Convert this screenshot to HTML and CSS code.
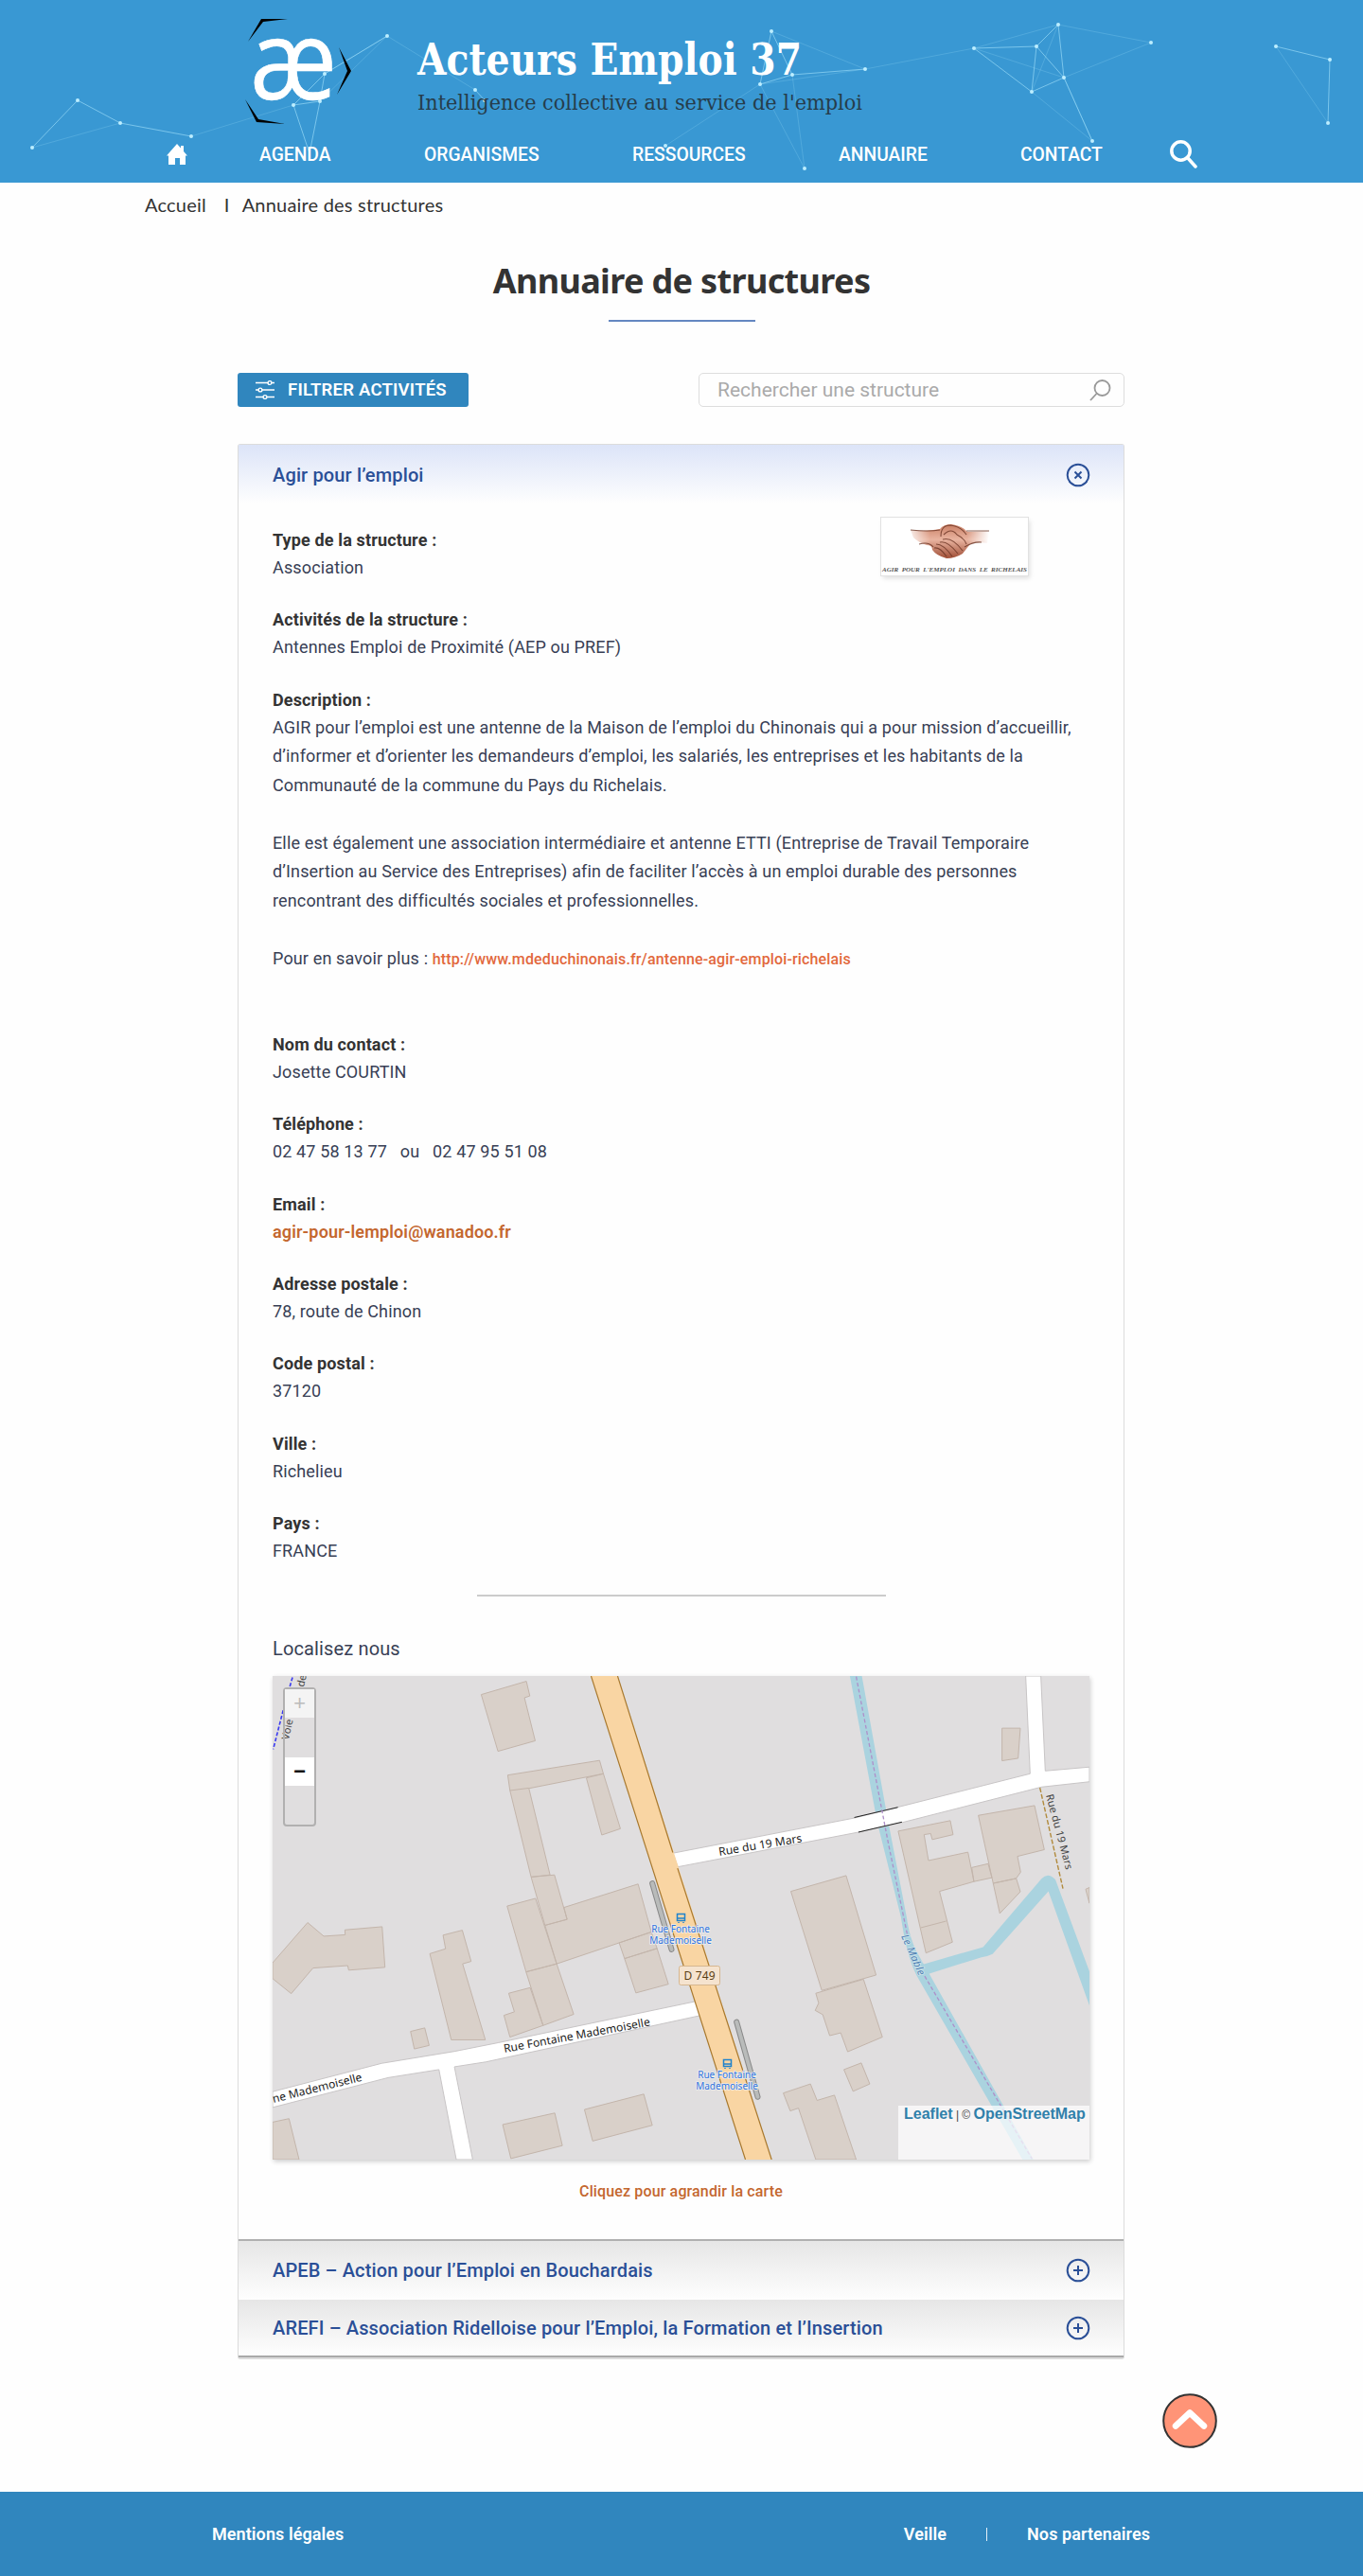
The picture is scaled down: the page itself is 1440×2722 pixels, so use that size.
FILE: index.html
```html
<!DOCTYPE html>
<html lang="fr">
<head>
<meta charset="utf-8">
<title>Annuaire de structures</title>
<link rel="stylesheet" href="styles.css">
</head>
<body>
<header class="banner">
  <svg class="network" viewBox="0 0 1440 193" aria-hidden="true">
    <g class="faint"><path d="M34 156L127 130M202 144L310 111M343 78L409 38L338 107M409 38L502 95M703 154L803 89M815 33L914 73M803 89L914 73L1029 51L1118 26L1216 45L1124 82L1029 51M803 89L850 178L837 79M1118 26L1090 97L1154 149L1124 82M1348 49L1403 130"/></g>
    <g class="links"><path d="M34 156L82 106L127 130L202 144M310 111L343 78L409 38M343 78L338 107L310 111L327 162L338 107M502 95L512 106M803 89L815 33L837 79L803 89M837 79L914 73M1029 51L1095 49L1118 26L1124 82L1095 49L1090 97L1029 51M1090 97L1124 82L1154 149M1348 49L1405 63L1403 130"/></g>
    <g class="nodes"><path d="M34 156h0M82 106h0M127 130h0M202 144h0M310 111h0M343 78h0M338 107h0M409 38h0M502 95h0M512 106h0M703 154h0M815 33h0M837 79h0M803 89h0M914 73h0M850 178h0M1029 51h0M1118 26h0M1095 49h0M1090 97h0M1124 82h0M1216 45h0M1154 149h0M1348 49h0M1405 63h0M1403 130h0"/></g>
  </svg>
  <div class="brand">
    <svg class="logo" viewBox="0 0 114 113" role="img" aria-label="Acteurs Emploi 37">
      <path d="M3 24L17 0H45L19 3ZM99 30L112 55L97 80L108 55ZM0 85L14 106L42 111L12 109Z"/>
      <text x="5" y="84.500" textLength="92" lengthAdjust="spacingAndGlyphs">æ</text>
    </svg>
    <div class="brand-text">
      <svg class="wordmark" viewBox="0 0 480 100">
        <text class="name" x="1" y="42" textLength="406" lengthAdjust="spacingAndGlyphs">Acteurs Emploi 37</text>
        <text class="motto" x="1" y="79" textLength="470" lengthAdjust="spacingAndGlyphs">Intelligence collective au service de l'emploi</text>
      </svg>
    </div>
  </div>
  <nav class="menu">
    <a class="home"><svg viewBox="0 0 22 22"><path d="M11 0l4 4.500V2h3v6l4 4.500h-2V22h-6v-7H9v7H2v-9.500H0z"/></svg></a>
    <a>AGENDA</a><a>ORGANISMES</a><a>RESSOURCES</a><a>ANNUAIRE</a><a>CONTACT</a>
    <a class="find"><svg viewBox="0 0 29 30"><circle cx="11.500" cy="11.500" r="9.700"/><path d="M18.500 18.500L27 28"/></svg></a>
  </nav>
</header>
<p class="crumbs"><a>Accueil</a><span>I</span><a>Annuaire des structures</a></p>
<main>
  <h1><span>Annuaire de structures</span></h1>
  <div class="tools">
    <button class="filter"><svg viewBox="0 0 20 20"><path d="M0 2.500h13M17 2.500h3M0 10h3M7 10h13M0 17.500h8M12 17.500h8"/><circle cx="15" cy="2.500" r="1.900"/><circle cx="5" cy="10" r="1.900"/><circle cx="10" cy="17.500" r="1.900"/></svg>FILTRER ACTIVITÉS</button>
    <div class="search"><span>Rechercher une structure</span><svg viewBox="0 0 23 23"><circle cx="13.500" cy="9" r="8"/><path d="M7.500 15L1 22"/></svg></div>
  </div>
  <section class="panel">
    <div class="panel-head"><h2>Agir pour l’emploi</h2><svg class="toggle" viewBox="0 0 26 26"><circle cx="13" cy="13" r="11.300"/><path d="M9.500 9.500l7 7M16.500 9.500l-7 7"/></svg></div>
    <div class="panel-body">
      <svg class="hands" viewBox="0 0 155 61">
        <defs>
          <linearGradient id="skin" x1="0" y1="0" x2="0" y2="1"><stop offset="0" stop-color="#c97e64"/><stop offset=".45" stop-color="#e9b4a0"/><stop offset="1" stop-color="#a04e36"/></linearGradient>
          <linearGradient id="wrist" x1="0" y1="0" x2="1" y2="0"><stop offset="0" stop-color="#fff" stop-opacity=".8"/><stop offset=".25" stop-color="#fff" stop-opacity="0"/><stop offset=".72" stop-color="#fff" stop-opacity="0"/><stop offset="1" stop-color="#fff"/></linearGradient>
        </defs>
        <path d="M31 13Q48 15 62 12Q66 7 74 7Q86 9 91 15Q104 15 114 14L112 27Q103 25 94 28Q89 34 86 38Q78 43 69 43Q58 40 54 34Q54 29 48 29Q39 26 34 21Z" fill="url(#skin)"/>
        <path d="M31 13H114V29H31Z" fill="url(#wrist)"/>
        <path class="crease" d="M31 13Q50 15 62 13M90 14L114 14M63 20Q63 8 73 8Q84 9 90 18M66 18Q74 10 80 18Q88 22 90 28M65 23Q75 20 86 35M62 26Q70 24 81 38M58 28Q66 28 75 41M56 32Q62 31 69 41M40 28Q50 25 55 31M88 31Q98 25 106 26"/>
        <text x="1" y="57" textLength="153" lengthAdjust="spacingAndGlyphs">AGIR &nbsp;POUR &nbsp;L'EMPLOI &nbsp;DANS &nbsp;LE &nbsp;RICHELAIS</text>
      </svg>
      <dl>
        <div><dt>Type de la structure :</dt><dd>Association</dd></div>
        <div><dt>Activités de la structure :</dt><dd>Antennes Emploi de Proximité (AEP ou PREF)</dd></div>
        <div class="desc"><dt>Description :</dt><dd>
          <p>AGIR pour l’emploi est une antenne de la Maison de l’emploi du Chinonais qui a pour mission d’accueillir,<br>d’informer et d’orienter les demandeurs d’emploi, les salariés, les entreprises et les habitants de la<br>Communauté de la commune du Pays du Richelais.</p>
          <p>Elle est également une association intermédiaire et antenne ETTI (Entreprise de Travail Temporaire<br>d’Insertion au Service des Entreprises) afin de faciliter l’accès à un emploi durable des personnes<br>rencontrant des difficultés sociales et professionnelles.</p>
          <p>Pour en savoir plus : <a class="url">http://www.mdeduchinonais.fr/antenne-agir-emploi-richelais</a></p>
        </dd></div>
        <div><dt>Nom du contact :</dt><dd>Josette COURTIN</dd></div>
        <div><dt>Téléphone :</dt><dd>02 47 58 13 77 &nbsp; ou &nbsp; 02 47 95 51 08</dd></div>
        <div><dt>Email :</dt><dd><a class="mail">agir-pour-lemploi@wanadoo.fr</a></dd></div>
        <div><dt>Adresse postale :</dt><dd>78, route de Chinon</dd></div>
        <div><dt>Code postal :</dt><dd>37120</dd></div>
        <div><dt>Ville :</dt><dd>Richelieu</dd></div>
        <div><dt>Pays :</dt><dd>FRANCE</dd></div>
      </dl>
      <hr>
      <h3>Localisez nous</h3>
      <div class="map">
        <svg class="tiles" viewBox="24 141 2588 1381" preserveAspectRatio="none">
          <path class="water" d="M1853 141H1891L1975 560L2033 830Q2040 880 2062 925L2105 992L2435 1522H2400L2070 1005Q2034 950 2015 830L1940 560Z"/>
          <path class="water" d="M2082 965L2275 915L2460 720Q2480 700 2504 722L2612 985V1082L2482 756L2305 935Q2290 942 2270 944L2100 992Z"/>
          <g class="building">
            <path d="M685 194L828 156L839 198L822 203L856 326L738 356ZM769 424L1060 382L1072 420L836 462L903 709L843 715L776 468ZM1018 432L1072 420L1126 577L1067 595ZM776 468L836 461M843 715L917 709L957 836L887 853ZM947 802L1182 735L1224 872L924 963L887 853L957 836ZM767 798L857 776L924 963L827 986ZM1122 903L1224 872L1242 919L1139 948ZM1139 948L1242 919L1278 1021L1175 1046ZM827 986L924 963L978 1107L881 1139ZM772 1047L840 1031L881 1139L776 1172L757 1110L790 1100ZM522 934L572 920L564 881L625 867L653 956L626 963L698 1180H590ZM24 960L135 845L186 884L254 880L253 866L371 857L380 973L265 981L262 968L152 975L83 1048L24 1005ZM461 1156L506 1146L520 1196L473 1206ZM24 1415L76 1405L108 1522H24ZM753 1422L918 1389L942 1482L779 1519ZM1012 1379L1200 1335L1227 1424L1038 1469Z"/>
            <path transform="translate(1320)" d="M346 756L521 711L616 995L444 1039ZM425 1047L576 1007L636 1172L526 1214L504 1160L469 1168L447 1108L423 1096L434 1075ZM514 1265L569 1246L596 1306L543 1327ZM322 1332L408 1306L429 1353L484 1338L553 1522H425L370 1375L344 1383ZM1015 290H1073L1066 376L1015 383ZM940 539L1118 511L1149 637L1064 656L1074 701L1060 719L987 733ZM987 733L1060 719L1073 757L1008 819ZM919 688L971 677L983 717L926 728ZM686 584L851 554L860 594L794 608L789 591L768 594L782 668L907 644L926 728L817 756L858 901L774 932ZM757 860L838 841M1292 745L1280 750L1292 790Z"/>
          </g>
          <path class="road" d="M24 1328L370 1247L600 1213L740 1188L1365 1070L1377 1111L700 1243L600 1257L658 1522H606L551 1265L390 1288L24 1373Z"/>
          <path class="road" d="M1292 647L1870 546L2060 503L2424 420L2410 141H2458L2472 412L2612 401V443L2460 458L2020 559L1880 587L1308 686Z"/>
          <path class="bridge" d="M1867 545L2005 516M1880 587L2018 558"/>
          <path class="main" d="M1033 141H1117L1605 1522H1522Z"/>
          <path class="casing" d="M1033 141L1522 1522M1117 141L1292 645M1307 690L1605 1522"/>
          <path class="lane-edge" d="M1227 733L1288 922M1494 1129L1561 1343"/>
          <path class="lane" d="M1227 733L1288 922M1494 1129L1561 1343"/>
          <path class="limit" d="M1873 143L1975 620L2035 880M2090 998L2430 1520"/>
          <path class="foot" d="M2455 460L2528 748"/>
          <path class="track" d="M87 145L60 230L26 350"/>
        </svg>
        <svg class="labels" viewBox="0 0 863 511">
          <text transform="translate(245 398) rotate(-10.500)" textLength="157">Rue Fontaine Mademoiselle</text>
          <text transform="translate(1 451) rotate(-14)" textLength="97">ne Mademoiselle</text>
          <text transform="translate(472 190) rotate(-9.500)" textLength="89">Rue du 19 Mars</text>
          <text class="small" transform="translate(817 126) rotate(75)" textLength="82">Rue du 19 Mars</text>
          <text class="small" transform="translate(17 68) rotate(-78)">Voie</text>
          <text class="small" transform="translate(33 12) rotate(-78)">de</text>
          <text class="river" transform="translate(664 275) rotate(66)" textLength="46">Le Mable</text>
          <g class="stop"><text x="431" y="271">Rue Fontaine</text><text x="431" y="283">Mademoiselle</text><text x="480" y="425">Rue Fontaine</text><text x="480" y="437">Mademoiselle</text></g>
          <g class="bus"><path d="M427.500 251.500h8v7h-8zM427.500 256h8M429 260v1M434 260v1M476.500 405.500h8v7h-8zM476.500 410h8M478 414v1M483 414v1"/></g>
          <rect class="ref" x="429.500" y="306.500" width="43" height="20" rx="2"/>
          <text class="ref-text" x="451" y="321" textLength="33">D 749</text>
        </svg>
        <div class="zoom"><span class="off">+</span><span>−</span></div>
        <div class="credit"><b>Leaflet</b> | © <b>OpenStreetMap</b></div>
      </div>
      <p class="enlarge">Cliquez pour agrandir la carte</p>
    </div>
    <div class="row"><h2>APEB – Action pour l’Emploi en Bouchardais</h2><svg class="toggle" viewBox="0 0 26 26"><circle cx="13" cy="13" r="11.300"/><path d="M13 8v10M8 13h10"/></svg></div>
    <div class="row last"><h2>AREFI – Association Ridelloise pour l’Emploi, la Formation et l’Insertion</h2><svg class="toggle" viewBox="0 0 26 26"><circle cx="13" cy="13" r="11.300"/><path d="M13 8v10M8 13h10"/></svg></div>
  </section>
  <div class="up"><svg viewBox="0 0 58 58"><circle cx="29" cy="29" r="27.800"/><path d="M14 34.500L29 20.500L44 34.500"/></svg></div>
</main>
<footer><a>Mentions légales</a><div><a>Veille</a><i></i><a>Nos partenaires</a></div></footer>
</body>
</html>
```
FILE: styles.css
```css
* { box-sizing: border-box; }
body { margin: 0; background: #fefefe; font-family: Roboto, "Liberation Sans", sans-serif; color: #383f55; }
h1, h2, h3, p, dl, dd { margin: 0; }
svg { display: block; flex: none; }

.banner { position: relative; height: 193px; background: #3998d3; padding-top: 20px; }
.network { position: absolute; left: 0; top: 0; width: 1440px; height: 193px; fill: none; stroke: #a5e3fb; }
.network .links { stroke-width: 1; opacity: .6; }
.network .faint { stroke-width: 1; opacity: .22; }
.network .nodes { stroke: #bdeeff; stroke-width: 4; stroke-linecap: round; }
.brand { position: relative; display: flex; gap: 67px; padding-left: 259px; height: 113px; }
.logo { width: 114px; height: 113px; overflow: visible; }
.logo text { font: 400 117px "Open Sans", sans-serif; fill: #fff; stroke: #fff; stroke-width: .6; }
.wordmark { width: 480px; height: 100px; margin-top: 17px; overflow: visible; }
.name { font: bold 46px "DejaVu Serif", serif; fill: #fff; }
.motto { font: 22px "DejaVu Serif", serif; fill: #263d4b; }
.menu { position: relative; display: flex; align-items: center; height: 30px; margin-top: 15px; padding-left: 176px; color: #fff; font-size: 19.300px; font-weight: 500; }
.menu a { flex: none; width: 122px; margin-right: 98px; white-space: nowrap; }
.menu .home { width: 22px; margin-right: 76px; }
.menu a:nth-child(2) { width: 76px; }
.menu a:nth-child(4) { width: 120px; }
.menu a:nth-child(5) { width: 94px; }
.menu a:nth-child(6) { width: 87px; margin-right: 71px; }
.menu .find { width: 29px; margin: 0; }
.home svg { width: 22px; height: 22px; fill: #fff; }
.find svg { width: 29px; height: 30px; fill: none; stroke: #fff; stroke-width: 3.500; stroke-linecap: round; }

.crumbs { display: flex; height: 48px; padding-left: 153px; font: 20px/46px Lato, sans-serif; letter-spacing: .2px; color: #333; }
.crumbs span { margin: 0 13px 0 19px; }

h1 { width: 400px; margin: 29px auto 0; height: 70px; text-align: center; white-space: nowrap; font: 700 36px/54px "Noto Sans", sans-serif; letter-spacing: -.650px; color: #333; }
h1::after { content: ""; display: block; width: 155px; height: 2px; margin: 14px auto 0; background: #6487c1; }

.tools { display: flex; justify-content: space-between; width: 937px; margin: 54px auto 39px 251px; height: 36px; }
.filter { display: flex; align-items: center; gap: 14px; width: 244px; padding: 0 0 0 19px; border: 0; border-radius: 3px; background: #3086be; color: #fff; font: 600 18.500px Roboto, sans-serif; letter-spacing: .220px; white-space: nowrap; }
.filter svg { width: 20px; height: 20px; fill: none; stroke: #fff; stroke-width: 1.400; }
.search { display: flex; align-items: center; justify-content: space-between; width: 450px; padding: 0 13px 0 19px; border: 1px solid #ddd; border-radius: 5px; color: #aaa; font-size: 21px; line-height: 32px; }
.search span { margin-top: -1px; }
.search svg { width: 23px; height: 23px; fill: none; stroke: #999; stroke-width: 1.800; }

.panel { width: 937px; margin-left: 251px; border: 1px solid #dcdcdc; border-width: 1px 1px 2px 1px; border-radius: 3px; height: 2024px; letter-spacing: .140px; }
.panel-head, .row { display: flex; justify-content: space-between; align-items: center; height: 62px; padding: 1px 35px 0 36px; background: linear-gradient(#dce4f8, #fefefe); }
.panel h2 { font-size: 20px; font-weight: 500; color: #2a4f97; white-space: nowrap; }
.toggle { width: 26px; height: 26px; fill: none; stroke: #2a4f97; stroke-width: 2; }
.panel-body { position: relative; height: 1834px; padding: 24px 36px 0; }
.hands { position: absolute; left: 679px; top: 15px; width: 155px; height: 61px; background: #fff; outline: 1px solid #e2e2e2; box-shadow: 2px 3px 5px #0002; }
.hands text { font: italic bold 6px "Liberation Serif", serif; letter-spacing: 0; fill: #555; }
.crease { fill: none; stroke: #6b3524; stroke-width: 1.100; opacity: .8; }

dt, dd { white-space: nowrap; font-size: 18px; }
dt { height: 29px; line-height: 29px; font-weight: 700; color: #333; }
dl > div { height: 84.400px; }
dd { line-height: 30.500px; height: 30.500px; }
dl .desc { height: 364px; }
.desc p { margin-bottom: 30.500px; }
.url { color: #e2683c; font-size: 16px; font-weight: 500; }
.mail { color: #c4672f; font-weight: 600; }
hr { width: 432px; margin: 5px auto 0; border: 0; border-top: 2px solid #ccc; }
h3 { margin: 42px 0 0; height: 42px; line-height: 26px; font-size: 20px; font-weight: 400; }

.map { position: relative; width: 863px; height: 511px; background: #e0dedf; box-shadow: 1px 2px 5px #0003; letter-spacing: 0; }
.tiles, .labels { position: absolute; inset: 0; width: 863px; height: 511px; overflow: hidden; }
.tiles path { vector-effect: non-scaling-stroke; }
.water { fill: #aad3df; }
.building { fill: #d9d0c9; stroke: #c3b5ab; stroke-width: 1; }
.road { fill: #fff; stroke: #c8c5c6; stroke-width: 1; }
.main { fill: #f9d5a3; }
.casing, .bridge, .limit, .foot, .track, .lane, .lane-edge { fill: none; }
.casing { stroke: #a8792f; stroke-width: 1.200; }
.bridge { stroke: #222; stroke-width: 1; }
.lane-edge { stroke: #888; stroke-width: 6; stroke-linecap: round; }
.lane { stroke: #b9bbba; stroke-width: 4; stroke-linecap: round; }
.limit { stroke: #ae8fc9; stroke-width: 1.300; stroke-dasharray: 4 2.500; }
.foot { stroke: #b18a3c; stroke-width: 1.400; stroke-dasharray: 5 2; }
.track { stroke: #3a3af0; stroke-width: 1.600; stroke-dasharray: 4 2; }
.labels { font: 12px "Noto Sans", sans-serif; fill: #222; }
.labels .small { font-size: 11px; fill: #444; }
.labels .river { font-size: 11px; font-style: italic; fill: #4d80b3; paint-order: stroke; stroke: #d3e5ec; stroke-width: 1.500; }
.stop { font-size: 10px; text-anchor: middle; fill: #2e73de; paint-order: stroke; stroke: #eee; stroke-width: 1.500; }
.bus { fill: none; stroke: #2083cc; stroke-width: 1.500; }
.ref { fill: #f5e3cf; stroke: #d6b68f; }
.ref-text { font-size: 12px; text-anchor: middle; fill: #5a3e14; }
.zoom { position: absolute; left: 11px; top: 12px; width: 35px; height: 147px; border: 2px solid #b1b0b0; border-radius: 4px; }
.zoom span { display: block; height: 30px; margin-bottom: 42px; background: #fff; color: #111; font: bold 22px/34px "Liberation Mono", monospace; text-align: center; }
.zoom .off { background: #f4f4f4; color: #bbb; font-weight: 400; }
.credit { position: absolute; right: 0; bottom: 0; width: 202px; height: 57px; padding-left: 6px; background: rgb(255 255 255 / .7); color: #444; font: 12px/18px "Liberation Sans", sans-serif; white-space: nowrap; }
.credit b { color: #3080aa; font-size: 16px; }
.enlarge { margin-top: 24px; text-align: center; color: #c4672f; font-size: 16px; font-weight: 500; line-height: 20px; }

.row { border-top: 2px solid #b0b0b0; background: linear-gradient(#e6e6e6, #fefefe); height: 64px; padding-top: 0; }
.last { border-top: 0; border-bottom: 2px solid #aaa; height: 61px; }
.up { width: 58px; height: 58px; margin: 36px 0 46px 1228px; }
.up circle { fill: #ff9477; stroke: #333; stroke-width: 2; }
.up path { fill: none; stroke: #fff; stroke-width: 6.500; stroke-linecap: round; stroke-linejoin: round; }

footer { display: flex; justify-content: space-between; align-items: center; height: 89px; padding: 0 225px 0 224px; background: #3086be; color: #fff; font-size: 18px; font-weight: 600; letter-spacing: .080px; }
footer div { display: flex; align-items: center; }
footer i { width: 1px; height: 14px; margin: 0 42px; background: #e4f0f8; }
```
